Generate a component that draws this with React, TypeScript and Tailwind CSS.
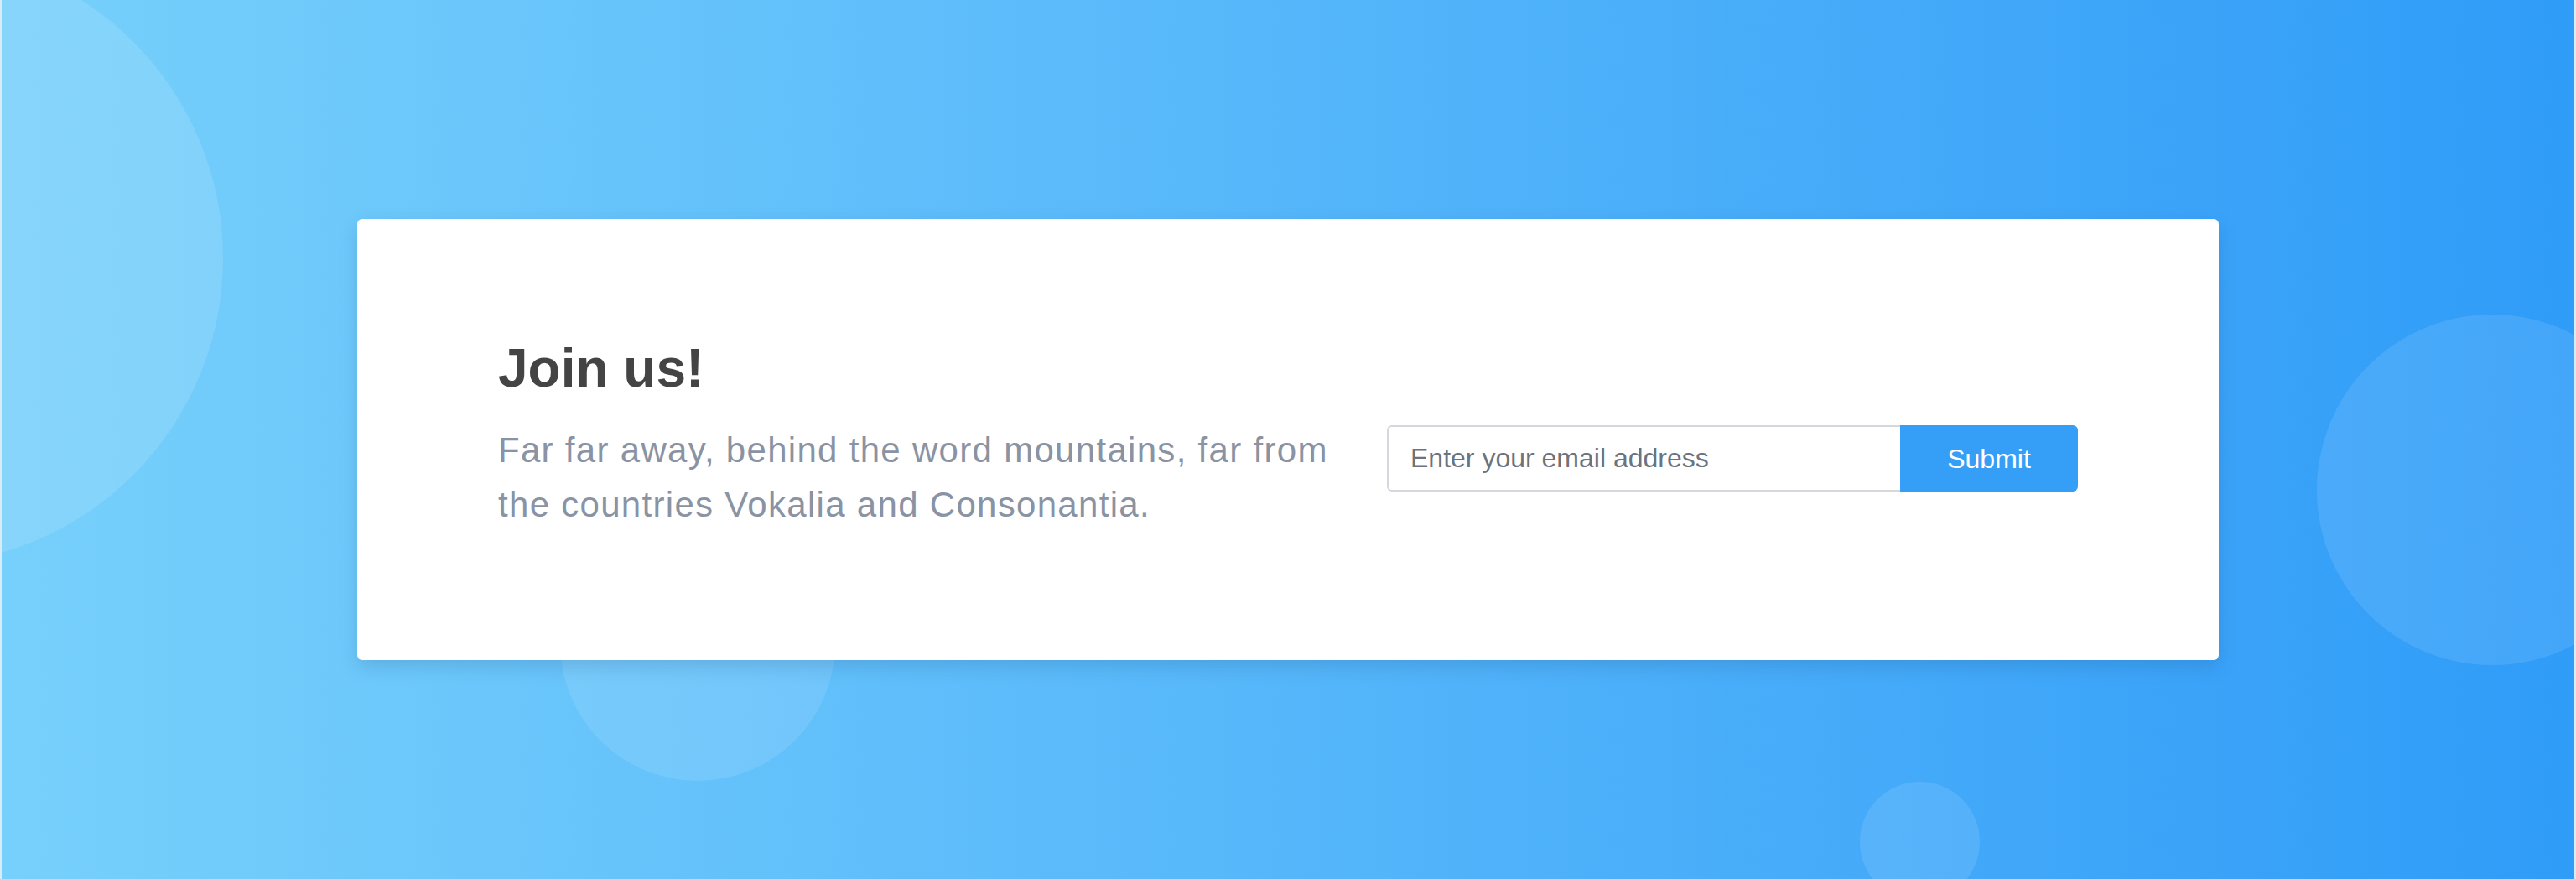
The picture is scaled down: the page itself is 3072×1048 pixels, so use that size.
import React from 'react';

const Bubble: React.FC<{ className: string }> = ({ className }) => (
  <div className={`absolute rounded-full ${className}`} />
);

export default function App() {
  return (
    <div className="relative h-[1048px] w-full overflow-hidden border-x-2 border-[#d6ecf7] bg-linear-to-r from-[#77d0fb] to-[#2f9cf8] font-['Liberation_Sans',Arial,sans-serif]">
      {/* decorative circles */}
      <Bubble className="left-[-466px] top-[-57px] h-[730px] w-[730px] bg-white/12" />
      <Bubble className="left-[666px] top-[603px] h-[328px] w-[328px] bg-white/10" />
      <Bubble className="left-[2761px] top-[375px] h-[418px] w-[418px] bg-white/10" />
      <Bubble className="left-[2216px] top-[932px] h-[143px] w-[143px] bg-white/10" />

      <div className="relative flex h-full items-center justify-center">
        <div className="flex h-[526px] w-[2220px] items-start justify-between rounded-md bg-white px-[168px] pt-[146px] shadow-[0_8px_22px_rgba(20,60,110,0.18)]">
          <div className="w-[1010px]">
            <h2 className="text-[64px] font-bold leading-[64px] text-[#444444]">Join us!</h2>
            <p className="mt-[33px] text-[42px] leading-[65px] tracking-[1.3px] text-[#8a93a3]">
              Far far away, behind the word mountains, far from the countries Vokalia and Consonantia.
            </p>
          </div>

          <form className="mt-[100px] flex h-[79px] w-[824px]" onSubmit={(e) => e.preventDefault()}>
            <input
              type="email"
              placeholder="Enter your email address"
              className="h-full flex-1 rounded-l-md border-2 border-r-0 border-[#d4d8dd] bg-white px-[26px] text-[32px] text-[#444444] placeholder:text-[#6c737d] focus:outline-none"
            />
            <button
              type="submit"
              className="h-full w-[212px] rounded-r-md bg-[#359ef7] text-[32px] text-white"
            >
              Submit
            </button>
          </form>
        </div>
      </div>
    </div>
  );
}
